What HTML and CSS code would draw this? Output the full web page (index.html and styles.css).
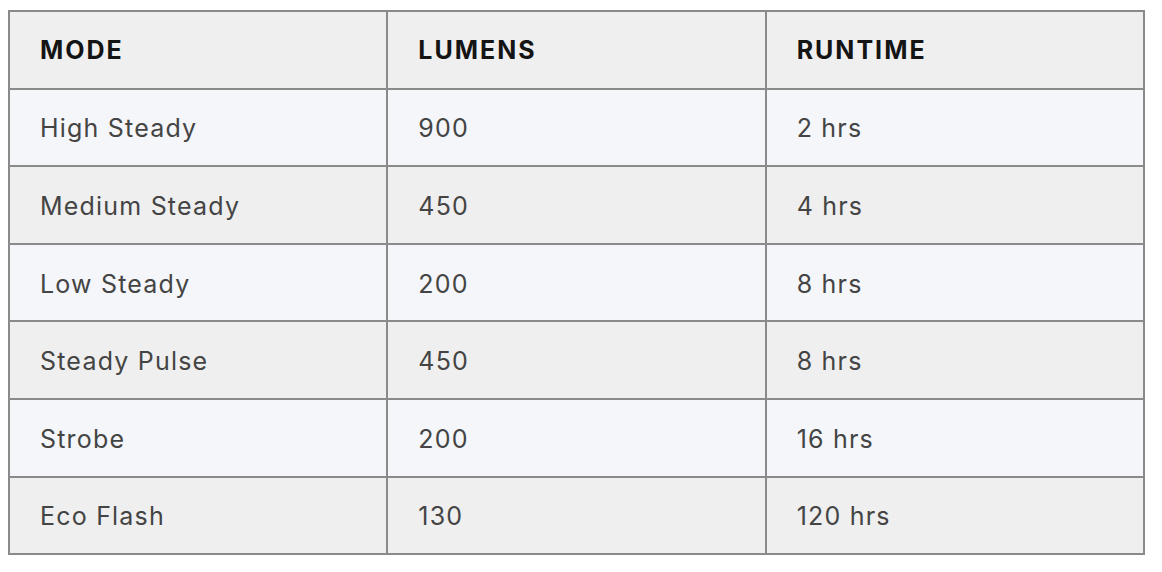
FILE: index.html
```html
<!DOCTYPE html>
<html>
<head>
<meta charset="utf-8">
<link rel="stylesheet" href="styles.css">
</head>
<body>
<table class="spec">
  <colgroup><col class="c"><col class="c"><col class="c"></colgroup>
  <thead>
    <tr><th>MODE</th><th>LUMENS</th><th>RUNTIME</th></tr>
  </thead>
  <tbody>
    <tr><td>High Steady</td><td>900</td><td>2 hrs</td></tr>
    <tr><td>Medium Steady</td><td>450</td><td>4 hrs</td></tr>
    <tr><td>Low Steady</td><td>200</td><td>8 hrs</td></tr>
    <tr><td>Steady Pulse</td><td>450</td><td>8 hrs</td></tr>
    <tr><td>Strobe</td><td>200</td><td>16 hrs</td></tr>
    <tr><td>Eco Flash</td><td>130</td><td>120 hrs</td></tr>
  </tbody>
</table>
</body>
</html>
```
FILE: styles.css
```css
html, body {
  margin: 0;
  background: #ffffff;
}
body {
  padding: 10px 0 0 8px;
  font-family: Inter, "Noto Sans", sans-serif;
}
.spec {
  border-collapse: collapse;
  width: 1137px;
  table-layout: fixed;
}
.spec .c { width: 33.333%; }
.spec th, .spec td {
  border: 2px solid #8a8a8a;
  padding: 0 0 0 30px;
  text-align: left;
  vertical-align: middle;
}
.spec th {
  background: #efefef;
  color: #141414;
  font-weight: 700;
  font-size: 25px;
  letter-spacing: 2px;
  height: 74.6px;
  padding-top: 1px;
}
.spec td {
  color: #444444;
  font-size: 25px;
  letter-spacing: 1.2px;
  font-weight: 400;
  height: 73.6px;
  padding-top: 2px;
}
.spec tbody tr:nth-child(odd) td { background: #f4f6f9; }
.spec tbody tr:nth-child(even) td { background: #efefef; }
```
